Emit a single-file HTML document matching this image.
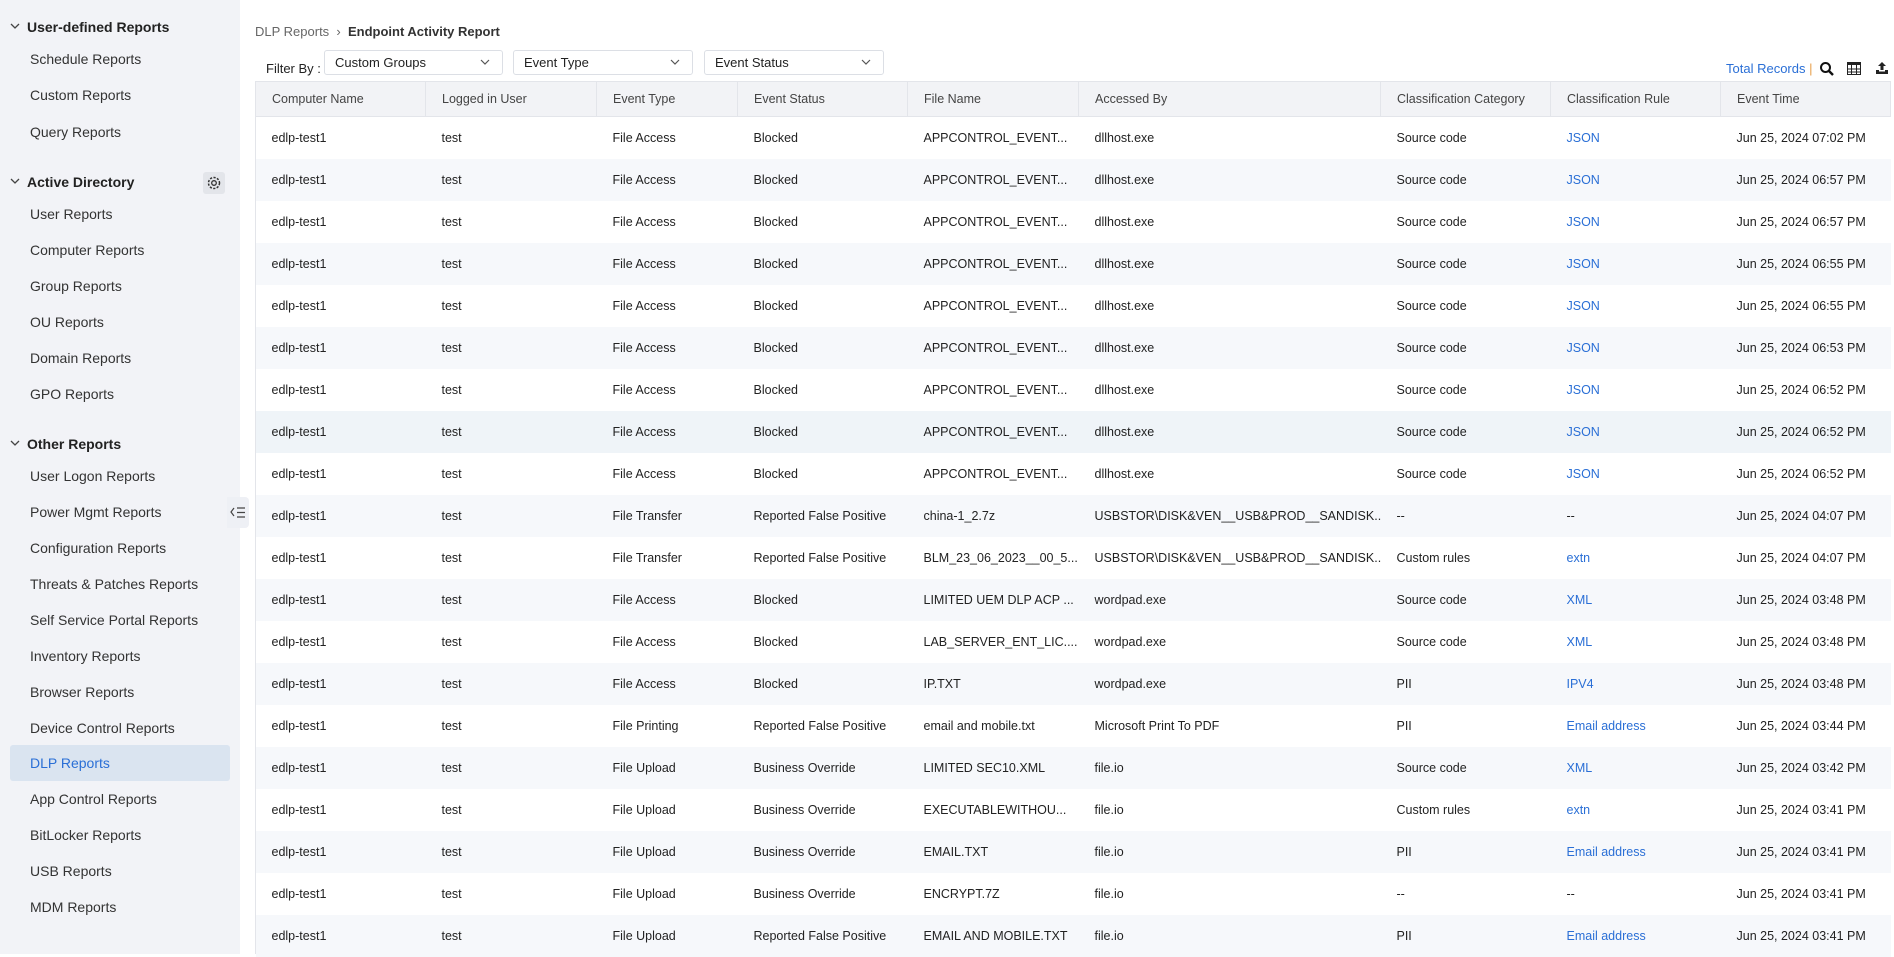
<!DOCTYPE html>
<html><head><meta charset="utf-8"><style>
*{box-sizing:border-box;margin:0;padding:0}
body{width:1894px;height:954px;overflow:hidden;background:#fff;font-family:"Liberation Sans",sans-serif;color:#222;position:relative}
#sb{position:absolute;left:0;top:0;width:240px;height:954px;background:#f2f3f7}
.h{position:absolute;left:10px;font-size:14px;font-weight:bold;color:#222;height:20px;line-height:20px}
.h svg{position:absolute;left:0;top:6px}
.h span{margin-left:17px}
.it{position:absolute;left:10px;width:220px;height:36px;line-height:36px;padding-left:20px;font-size:14px;color:#333}
.it.act{background:#dae4f0;border-radius:3px;color:#2a6fd6}
#col{position:absolute;left:227px;top:497px;width:22px;height:31px;background:#eef0f5;border-radius:0 4px 4px 0}
.bc{position:absolute;left:255px;top:24px;font-size:13px;color:#666}
.bc b{color:#333}
.fl{position:absolute;top:62px;font-size:13px;color:#222;line-height:1}
.dd{position:absolute;top:50px;height:25px;border:1px solid #dcdfe5;border-radius:3px;font-size:13px;line-height:23px;padding-left:10px;color:#222;background:#fff}
.dd svg{position:absolute;right:12px;top:8px}
table{position:absolute;left:255px;top:81px;border-collapse:collapse;table-layout:fixed;width:1635px;font-size:12.5px}
th{height:35px;background:#f2f3f6;color:#444;font-weight:normal;text-align:left;padding-left:16px;border:1px solid #e3e5ea;white-space:nowrap;overflow:hidden}
td{height:42px;padding-left:16px;white-space:nowrap;overflow:hidden;color:#222}
tr:nth-child(odd) td{background:#f6f8fb}
tr.hv td{background:#eff4f8}
td.l{color:#2a6fd6}
</style></head><body>
<div id="sb">
<div class="h" style="top:17px"><svg width="10" height="8"><path d="M1 1l4 4 4-4" stroke="#444" fill="none" stroke-width="1.3"/></svg><span>User-defined Reports</span></div>
<div class="it" style="top:41px">Schedule Reports</div>
<div class="it" style="top:77px">Custom Reports</div>
<div class="it" style="top:114px">Query Reports</div>
<div class="h" style="top:172px"><svg width="10" height="8"><path d="M1 1l4 4 4-4" stroke="#444" fill="none" stroke-width="1.3"/></svg><span>Active Directory</span></div>
<svg style="position:absolute;left:203px;top:172px" width="22" height="22"><rect width="22" height="22" rx="3" fill="#e3e5ea"/><circle cx="11" cy="11" r="5.5" fill="none" stroke="#333" stroke-width="1.5" stroke-dasharray="2.2 1.4"/><circle cx="11" cy="11" r="2.3" fill="none" stroke="#333" stroke-width="1.3"/></svg>
<div class="it" style="top:196px">User Reports</div>
<div class="it" style="top:232px">Computer Reports</div>
<div class="it" style="top:268px">Group Reports</div>
<div class="it" style="top:304px">OU Reports</div>
<div class="it" style="top:340px">Domain Reports</div>
<div class="it" style="top:376px">GPO Reports</div>
<div class="h" style="top:434px"><svg width="10" height="8"><path d="M1 1l4 4 4-4" stroke="#444" fill="none" stroke-width="1.3"/></svg><span>Other Reports</span></div>
<div class="it" style="top:458px">User Logon Reports</div>
<div class="it" style="top:494px">Power Mgmt Reports</div>
<div class="it" style="top:530px">Configuration Reports</div>
<div class="it" style="top:566px">Threats &amp; Patches Reports</div>
<div class="it" style="top:602px">Self Service Portal Reports</div>
<div class="it" style="top:638px">Inventory Reports</div>
<div class="it" style="top:674px">Browser Reports</div>
<div class="it" style="top:710px">Device Control Reports</div>
<div class="it act" style="top:745px">DLP Reports</div>
<div class="it" style="top:781px">App Control Reports</div>
<div class="it" style="top:817px">BitLocker Reports</div>
<div class="it" style="top:853px">USB Reports</div>
<div class="it" style="top:889px">MDM Reports</div>
</div>
<div id="col"><svg width="22" height="31"><path d="M7 11l-3 4 3 4" stroke="#444" fill="none" stroke-width="1.2"/><path d="M10 11h8M10 15.5h8M10 20h8" stroke="#444" stroke-width="1.3"/></svg></div>
<div class="bc">DLP Reports &nbsp;&#8250;&nbsp; <b>Endpoint Activity Report</b></div>
<div class="fl" style="left:266px">Filter By :</div>
<div class="dd" style="left:324px;width:179px">Custom Groups<svg width="10" height="7"><path d="M1 1l4 4 4-4" stroke="#555" fill="none" stroke-width="1.2"/></svg></div>
<div class="dd" style="left:513px;width:180px">Event Type<svg width="10" height="7"><path d="M1 1l4 4 4-4" stroke="#555" fill="none" stroke-width="1.2"/></svg></div>
<div class="dd" style="left:704px;width:180px">Event Status<svg width="10" height="7"><path d="M1 1l4 4 4-4" stroke="#555" fill="none" stroke-width="1.2"/></svg></div>
<div style="position:absolute;left:1726px;top:61px;font-size:13px;color:#2a6fd6">Total Records <span style="color:#e8a04c">|</span></div>
<svg style="position:absolute;left:1819px;top:61px" width="16" height="16"><circle cx="6.5" cy="6.5" r="4.5" fill="none" stroke="#111" stroke-width="2"/><path d="M10 10l4 4" stroke="#111" stroke-width="2.4"/></svg>
<svg style="position:absolute;left:1847px;top:62px" width="14" height="13"><rect x="0.5" y="0.5" width="13" height="12" fill="none" stroke="#222"/><rect x="0" y="0" width="14" height="3" fill="#222"/><path d="M0 7h14M0 10h14M4.5 0v13M9.5 0v13" stroke="#222"/></svg>
<svg style="position:absolute;left:1875px;top:61px" width="14" height="14"><path d="M7 1l-4 4h2.5v4h3V5H11z" fill="#222"/><path d="M1 9v4h12V9h-3v1.5H4V9z" fill="#222"/></svg>
<table>
<colgroup><col style="width:170px"><col style="width:171px"><col style="width:141px"><col style="width:170px"><col style="width:171px"><col style="width:302px"><col style="width:170px"><col style="width:170px"><col style="width:170px"></colgroup>
<tr><th>Computer Name</th><th>Logged in User</th><th>Event Type</th><th>Event Status</th><th>File Name</th><th>Accessed By</th><th>Classification Category</th><th>Classification Rule</th><th>Event Time</th></tr>
<tr><td>edlp-test1</td><td>test</td><td>File Access</td><td>Blocked</td><td>APPCONTROL_EVENT...</td><td>dllhost.exe</td><td>Source code</td><td class="l">JSON</td><td>Jun 25, 2024 07:02 PM</td></tr>
<tr><td>edlp-test1</td><td>test</td><td>File Access</td><td>Blocked</td><td>APPCONTROL_EVENT...</td><td>dllhost.exe</td><td>Source code</td><td class="l">JSON</td><td>Jun 25, 2024 06:57 PM</td></tr>
<tr><td>edlp-test1</td><td>test</td><td>File Access</td><td>Blocked</td><td>APPCONTROL_EVENT...</td><td>dllhost.exe</td><td>Source code</td><td class="l">JSON</td><td>Jun 25, 2024 06:57 PM</td></tr>
<tr><td>edlp-test1</td><td>test</td><td>File Access</td><td>Blocked</td><td>APPCONTROL_EVENT...</td><td>dllhost.exe</td><td>Source code</td><td class="l">JSON</td><td>Jun 25, 2024 06:55 PM</td></tr>
<tr><td>edlp-test1</td><td>test</td><td>File Access</td><td>Blocked</td><td>APPCONTROL_EVENT...</td><td>dllhost.exe</td><td>Source code</td><td class="l">JSON</td><td>Jun 25, 2024 06:55 PM</td></tr>
<tr><td>edlp-test1</td><td>test</td><td>File Access</td><td>Blocked</td><td>APPCONTROL_EVENT...</td><td>dllhost.exe</td><td>Source code</td><td class="l">JSON</td><td>Jun 25, 2024 06:53 PM</td></tr>
<tr><td>edlp-test1</td><td>test</td><td>File Access</td><td>Blocked</td><td>APPCONTROL_EVENT...</td><td>dllhost.exe</td><td>Source code</td><td class="l">JSON</td><td>Jun 25, 2024 06:52 PM</td></tr>
<tr class="hv"><td>edlp-test1</td><td>test</td><td>File Access</td><td>Blocked</td><td>APPCONTROL_EVENT...</td><td>dllhost.exe</td><td>Source code</td><td class="l">JSON</td><td>Jun 25, 2024 06:52 PM</td></tr>
<tr><td>edlp-test1</td><td>test</td><td>File Access</td><td>Blocked</td><td>APPCONTROL_EVENT...</td><td>dllhost.exe</td><td>Source code</td><td class="l">JSON</td><td>Jun 25, 2024 06:52 PM</td></tr>
<tr><td>edlp-test1</td><td>test</td><td>File Transfer</td><td>Reported False Positive</td><td>china-1_2.7z</td><td>USBSTOR\DISK&amp;VEN__USB&amp;PROD__SANDISK...</td><td>--</td><td>--</td><td>Jun 25, 2024 04:07 PM</td></tr>
<tr><td>edlp-test1</td><td>test</td><td>File Transfer</td><td>Reported False Positive</td><td>BLM_23_06_2023__00_5...</td><td>USBSTOR\DISK&amp;VEN__USB&amp;PROD__SANDISK...</td><td>Custom rules</td><td class="l">extn</td><td>Jun 25, 2024 04:07 PM</td></tr>
<tr><td>edlp-test1</td><td>test</td><td>File Access</td><td>Blocked</td><td>LIMITED UEM DLP ACP ...</td><td>wordpad.exe</td><td>Source code</td><td class="l">XML</td><td>Jun 25, 2024 03:48 PM</td></tr>
<tr><td>edlp-test1</td><td>test</td><td>File Access</td><td>Blocked</td><td>LAB_SERVER_ENT_LIC....</td><td>wordpad.exe</td><td>Source code</td><td class="l">XML</td><td>Jun 25, 2024 03:48 PM</td></tr>
<tr><td>edlp-test1</td><td>test</td><td>File Access</td><td>Blocked</td><td>IP.TXT</td><td>wordpad.exe</td><td>PII</td><td class="l">IPV4</td><td>Jun 25, 2024 03:48 PM</td></tr>
<tr><td>edlp-test1</td><td>test</td><td>File Printing</td><td>Reported False Positive</td><td>email and mobile.txt</td><td>Microsoft Print To PDF</td><td>PII</td><td class="l">Email address</td><td>Jun 25, 2024 03:44 PM</td></tr>
<tr><td>edlp-test1</td><td>test</td><td>File Upload</td><td>Business Override</td><td>LIMITED SEC10.XML</td><td>file.io</td><td>Source code</td><td class="l">XML</td><td>Jun 25, 2024 03:42 PM</td></tr>
<tr><td>edlp-test1</td><td>test</td><td>File Upload</td><td>Business Override</td><td>EXECUTABLEWITHOU...</td><td>file.io</td><td>Custom rules</td><td class="l">extn</td><td>Jun 25, 2024 03:41 PM</td></tr>
<tr><td>edlp-test1</td><td>test</td><td>File Upload</td><td>Business Override</td><td>EMAIL.TXT</td><td>file.io</td><td>PII</td><td class="l">Email address</td><td>Jun 25, 2024 03:41 PM</td></tr>
<tr><td>edlp-test1</td><td>test</td><td>File Upload</td><td>Business Override</td><td>ENCRYPT.7Z</td><td>file.io</td><td>--</td><td>--</td><td>Jun 25, 2024 03:41 PM</td></tr>
<tr><td>edlp-test1</td><td>test</td><td>File Upload</td><td>Reported False Positive</td><td>EMAIL AND MOBILE.TXT</td><td>file.io</td><td>PII</td><td class="l">Email address</td><td>Jun 25, 2024 03:41 PM</td></tr>
</table>
<div style="position:absolute;left:255px;top:81px;width:1px;height:873px;background:#e3e5ea"></div>
</body></html>
